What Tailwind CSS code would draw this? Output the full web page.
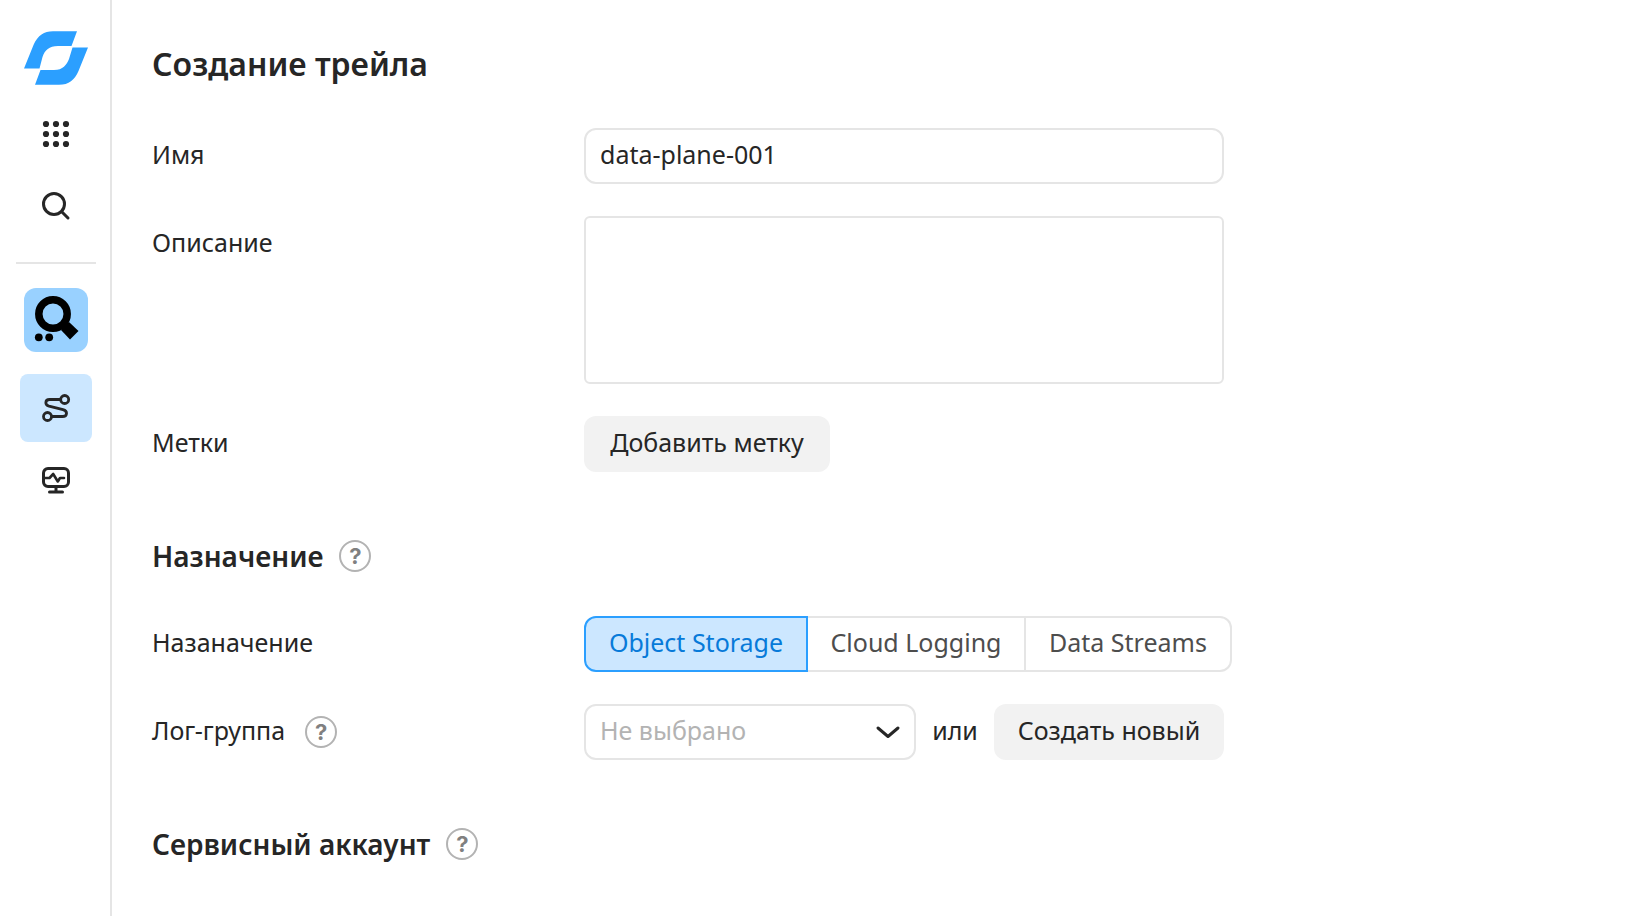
<!DOCTYPE html>
<html lang="ru">
<head>
  <meta charset="UTF-8" />
  <meta name="viewport" content="width=device-width, initial-scale=1" />
  <title>Создание трейла</title>
  <script src="https://cdn.jsdelivr.net/npm/@tailwindcss/browser@4"></script>
</head>
<body class="flex min-h-screen bg-white text-[#262626] text-[25px] leading-8 font-['Noto_Sans','Open_Sans',sans-serif]">

  <!-- SIDEBAR -->
  <aside class="flex w-28 shrink-0 flex-col items-center border-r-2 border-[#e5e5e5] pl-0.5 pt-[30px]">
    <a href="#" aria-label="Главная">
      <svg class="block h-14 w-16" viewBox="0 0 64 56" fill="#2b9fff">
        <path d="M0 38.5 L9.500 15 C14 5 20 1.200 29 1.200 H53 L47.500 16 H34 C25 16 21 20 18.500 27 L15.500 38.500 Z" />
        <path d="M48.500 17.500 H64 L54.500 41 C50.500 50 45 54.800 35 54.800 H11 L16.500 40 H30 C39 40 42.500 35 45 29 Z" />
      </svg>
    </a>
    <nav class="mt-3 flex flex-col items-center">
      <button class="flex h-[72px] w-[72px] items-center justify-center" aria-label="Все сервисы">
        <svg class="size-8" viewBox="0 0 32 32" fill="#262626">
          <circle cx="6" cy="6" r="3.100" /><circle cx="16" cy="6" r="3.100" /><circle cx="26" cy="6" r="3.100" />
          <circle cx="6" cy="16" r="3.100" /><circle cx="16" cy="16" r="3.100" /><circle cx="26" cy="16" r="3.100" />
          <circle cx="6" cy="26" r="3.100" /><circle cx="16" cy="26" r="3.100" /><circle cx="26" cy="26" r="3.100" />
        </svg>
      </button>
      <button class="flex h-[72px] w-[72px] items-center justify-center" aria-label="Поиск">
        <svg class="size-8" viewBox="0 0 32 32" fill="none" stroke="#262626" stroke-width="3" stroke-linecap="round">
          <circle cx="14" cy="14" r="10.500" />
          <path d="M22 22 L28 28" />
        </svg>
      </button>
    </nav>
    <hr class="mt-5 w-20 border-t-2 border-[#e5e5e5]" />
    <a href="#" class="mt-6 flex size-16 items-center justify-center rounded-xl bg-[#99d1ff]" aria-label="Audit Trails">
      <svg class="size-16" viewBox="0 0 64 64">
        <circle cx="29" cy="26" r="14.200" fill="none" stroke="#000" stroke-width="7.500" />
        <path d="M37 42 L45 34 L54.500 43 L46 51.500 Z" />
        <circle cx="14.800" cy="49.300" r="3.900" />
        <circle cx="25.200" cy="49.300" r="3.900" />
      </svg>
    </a>
    <nav class="mt-[22px] flex flex-col items-center gap-1">
      <a href="#" class="flex h-[68px] w-[72px] items-center justify-center rounded-lg bg-[#cce7ff]" aria-label="Трейлы">
        <svg class="size-8" viewBox="0 0 32 32" fill="none" stroke="#262626" stroke-width="2.800" stroke-linejoin="round">
          <circle cx="24.700" cy="7.500" r="4" />
          <circle cx="7.500" cy="24.500" r="4" />
          <path d="M20.500 7.500 H9.500 C5 7.500 4.500 13 9 14.200 L23 17.600 C28 19 27.500 24.500 22.500 24.500 H11.500" />
        </svg>
      </a>
      <a href="#" class="flex h-[68px] w-[72px] items-center justify-center rounded-lg" aria-label="Мониторинг">
        <svg class="size-8" viewBox="0 0 32 32" fill="none" stroke="#262626" stroke-width="3" stroke-linecap="round" stroke-linejoin="round">
          <rect x="3.500" y="4.500" width="25" height="18" rx="4.500" />
          <path d="M16 23 V28 M9.500 28 H22.500" />
          <path d="M4 14 H9.500 L13.200 10 L17.800 17.500 L20 14 H24" stroke-width="2.600" />
        </svg>
      </a>
    </nav>
  </aside>

  <!-- FORM -->
  <main class="min-w-0 flex-1 px-10 py-9">
    <h1 class="flex h-14 items-center text-[32px] font-semibold">Создание трейла</h1>

    <form class="mt-9 space-y-8">
      <div class="flex">
        <label for="trail-name" class="flex h-14 w-[432px] shrink-0 items-center pb-1">Имя</label>
        <input type="text" id="trail-name" value="data-plane-001" class="h-14 w-full max-w-[640px] rounded-xl border-2 border-[#e5e5e5] px-3.5 pb-1 focus:outline-none focus:border-[#2b9fff]" />
      </div>

      <div class="flex">
        <label for="trail-description" class="flex h-14 w-[432px] shrink-0 items-center pb-1">Описание</label>
        <textarea id="trail-description" class="block h-[168px] w-full max-w-[640px] resize-none rounded-md border-2 border-[#e5e5e5] px-3.5 py-2 focus:outline-none focus:border-[#2b9fff]"></textarea>
      </div>

      <div class="flex">
        <span class="flex h-14 w-[432px] shrink-0 items-center pb-1">Метки</span>
        <button type="button" class="h-14 w-[246px] rounded-xl bg-[#f2f2f2] pb-1 whitespace-nowrap hover:bg-[#e5e5e5]">Добавить метку</button>
      </div>

      <h2 class="mt-14 flex h-14 items-center gap-4 text-[28px] font-semibold">
        Назначение
        <button type="button" class="flex size-8 items-center justify-center rounded-full border-2 border-[#b3b3b3] text-[22px] leading-7 font-bold text-[#808080] font-['Inter',sans-serif]" aria-label="Справка">?</button>
      </h2>

      <div class="flex">
        <span id="target-label" class="flex h-14 w-[432px] shrink-0 items-center pb-1">Назаначение</span>
        <div role="radiogroup" aria-labelledby="target-label" class="flex h-14 text-[#4d4d4d] whitespace-nowrap">
          <label class="flex w-[224px] items-center justify-center rounded-l-xl border-2 border-[#2b9fff] bg-[#cce7ff] pb-1 text-[#077ad9]">
            <input type="radio" name="target" value="storage" class="sr-only" checked />Object Storage
          </label>
          <label class="flex w-[218px] items-center justify-center border-y-2 border-r-2 border-[#e5e5e5] pb-1">
            <input type="radio" name="target" value="logging" class="sr-only" />Cloud Logging
          </label>
          <label class="flex w-[206px] items-center justify-center rounded-r-xl border-y-2 border-r-2 border-[#e5e5e5] pb-1">
            <input type="radio" name="target" value="streams" class="sr-only" />Data Streams
          </label>
        </div>
      </div>

      <div class="flex">
        <div class="flex h-14 w-[432px] shrink-0 items-center gap-5">
          <label for="log-group" class="pb-1">Лог-группа</label>
          <button type="button" class="flex size-8 items-center justify-center rounded-full border-2 border-[#b3b3b3] text-[22px] leading-7 font-bold text-[#808080] font-['Inter',sans-serif]" aria-label="Справка">?</button>
        </div>
        <div class="flex w-full max-w-[640px] items-center justify-between gap-3">
          <div class="relative w-[332px]">
            <select id="log-group" class="h-14 w-full appearance-none rounded-xl border-2 border-[#e5e5e5] bg-white px-3.5 pb-1 text-[#b3b3b3] focus:outline-none">
              <option>Не выбрано</option>
            </select>
            <svg class="pointer-events-none absolute top-3 right-3 size-8" viewBox="0 0 32 32" fill="none" stroke="#262626" stroke-width="3" stroke-linecap="round" stroke-linejoin="round">
              <path d="M6 12 L16 20.500 L26 12" />
            </svg>
          </div>
          <span class="pb-1">или</span>
          <button type="button" class="h-14 w-[230px] rounded-xl bg-[#f2f2f2] pb-1 whitespace-nowrap hover:bg-[#e5e5e5]">Создать новый</button>
        </div>
      </div>

      <h2 class="mt-14 flex h-14 items-center gap-4 text-[28px] font-semibold">
        Сервисный аккаунт
        <button type="button" class="flex size-8 items-center justify-center rounded-full border-2 border-[#b3b3b3] text-[22px] leading-7 font-bold text-[#808080] font-['Inter',sans-serif]" aria-label="Справка">?</button>
      </h2>
    </form>
  </main>

</body>
</html>
